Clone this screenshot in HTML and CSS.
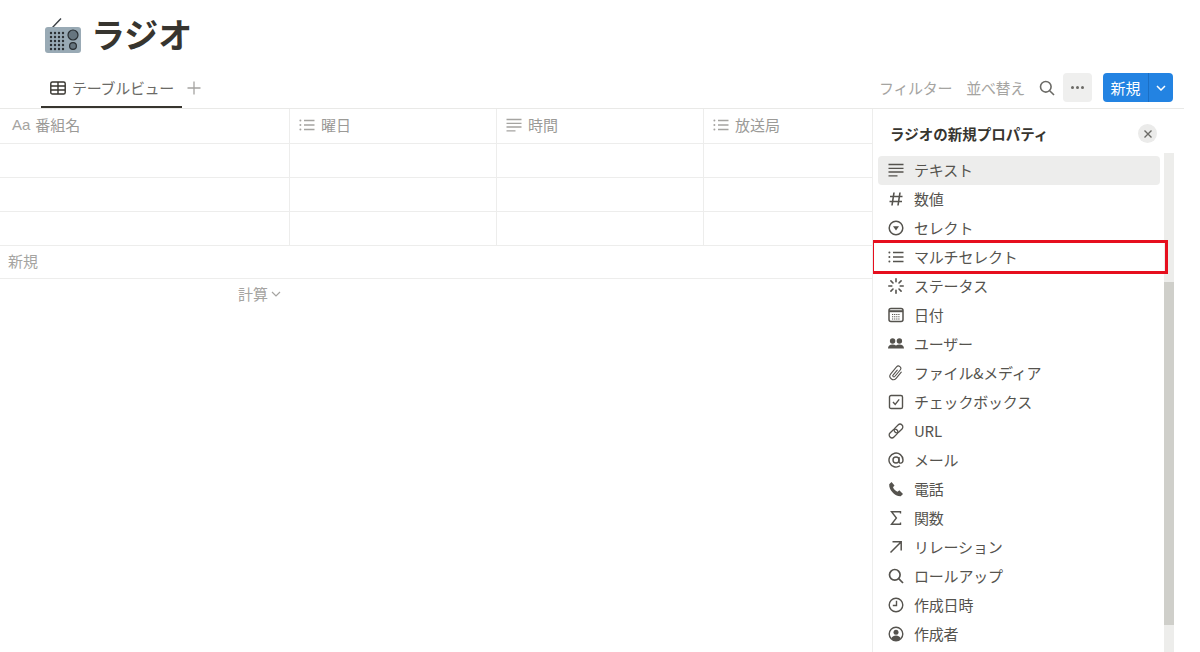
FILE: index.html
```html
<!DOCTYPE html>
<html lang="ja">
<head>
    <meta charset="UTF-8">
    <title>ラジオ</title>
    <link rel="stylesheet" href="styles.css">
</head>
<body>
    <div class="page">
        <div class="title-row">
            <svg class="radio-icon" viewBox="0 0 36 36">
                <path d="M7 10 L16 0.5" stroke="#3a3f44" stroke-width="1.4"/>
                <rect x="0" y="9" width="36" height="26" rx="3" fill="#99aab5"/>
                <g fill="#292f33">
                    <circle cx="6" cy="15" r="1.2"/><circle cx="10" cy="15" r="1.2"/><circle cx="14" cy="15" r="1.2"/><circle cx="18" cy="15" r="1.2"/>
                    <circle cx="6" cy="19" r="1.2"/><circle cx="10" cy="19" r="1.2"/><circle cx="14" cy="19" r="1.2"/><circle cx="18" cy="19" r="1.2"/>
                    <circle cx="6" cy="23" r="1.2"/><circle cx="10" cy="23" r="1.2"/><circle cx="14" cy="23" r="1.2"/><circle cx="18" cy="23" r="1.2"/>
                    <circle cx="6" cy="27" r="1.2"/><circle cx="10" cy="27" r="1.2"/><circle cx="14" cy="27" r="1.2"/><circle cx="18" cy="27" r="1.2"/>
                    <circle cx="6" cy="31" r="1.2"/><circle cx="10" cy="31" r="1.2"/><circle cx="14" cy="31" r="1.2"/><circle cx="18" cy="31" r="1.2"/>
                </g>
                <circle cx="28" cy="17" r="5" fill="#66757f" stroke="#292f33" stroke-width="1.2"/>
                <circle cx="28" cy="28" r="3.4" fill="#66757f" stroke="#292f33" stroke-width="1.2"/>
            </svg>
            <h1>ラジオ</h1>
        </div>

        <div class="toolbar">
            <div class="tab">
                <svg class="tab-icon" viewBox="0 0 16 16" fill="none" stroke="#37352f" stroke-width="1.4"><rect x="0.8" y="2" width="14.4" height="12" rx="1.6"/><path d="M1 6h14M1 10h14M8 2v12"/></svg>
                <span>テーブルビュー</span>
            </div>
            <svg class="add-view" viewBox="0 0 14 14" stroke="#a5a4a1" stroke-width="1.3"><path d="M7 0.5v13M0.5 7h13"/></svg>
            <div class="toolbar-right">
                <span class="tool-link">フィルター</span>
                <span class="tool-link">並べ替え</span>
                <svg class="search-icon" viewBox="0 0 16 16" fill="none" stroke="#6b6a66" stroke-width="1.6"><circle cx="6.8" cy="6.8" r="5.3"/><path d="M10.7 10.7l4.3 4.3"/></svg>
                <div class="more-btn"><i></i><i></i><i></i></div>
                <div class="new-btn">
                    <span class="new-label">新規</span>
                    <span class="new-arrow"><svg viewBox="0 0 10 6" fill="none" stroke="#fff" stroke-width="1.5"><path d="M1 1l4 4 4-4"/></svg></span>
                </div>
            </div>
        </div>

        <div class="content">
            <div class="table-area">
                <div class="row head">
                    <div class="cell first"><span class="aa">Aa</span>番組名</div>
                    <div class="cell">
                        <svg class="col-icon" viewBox="0 0 16 16" stroke="#a5a4a1" stroke-width="1.3"><path d="M5 3.5h10.500M5 8h10.500M5 12.500h10.500"/><g fill="#a5a4a1" stroke="none"><circle cx="1.4" cy="3.5" r="1"/><circle cx="1.4" cy="8" r="1"/><circle cx="1.4" cy="12.5" r="1"/></g></svg>
                        曜日
                    </div>
                    <div class="cell">
                        <svg class="col-icon" viewBox="0 0 16 16" stroke="#a5a4a1" stroke-width="1.3"><path d="M0.5 2.5h15M0.5 6.3h15M0.5 10h15M0.5 13.8h9"/></svg>
                        時間
                    </div>
                    <div class="cell">
                        <svg class="col-icon" viewBox="0 0 16 16" stroke="#a5a4a1" stroke-width="1.3"><path d="M5 3.5h10.500M5 8h10.500M5 12.500h10.500"/><g fill="#a5a4a1" stroke="none"><circle cx="1.4" cy="3.5" r="1"/><circle cx="1.4" cy="8" r="1"/><circle cx="1.4" cy="12.5" r="1"/></g></svg>
                        放送局
                    </div>
                </div>
                <div class="row"><div class="cell first"></div><div class="cell"></div><div class="cell"></div><div class="cell"></div></div>
                <div class="row"><div class="cell first"></div><div class="cell"></div><div class="cell"></div><div class="cell"></div></div>
                <div class="row"><div class="cell first"></div><div class="cell"></div><div class="cell"></div><div class="cell"></div></div>
                <div class="new-row">新規</div>
                <div class="calc-row">
                    <div class="calc">計算
                        <svg viewBox="0 0 10 6" fill="none" stroke="#a5a4a1" stroke-width="1.2"><path d="M1 1l4 4 4-4"/></svg>
                    </div>
                </div>
            </div>

            <div class="panel">
                <div class="panel-head">
                    <span>ラジオの新規プロパティ</span>
                    <div class="close">
                        <svg viewBox="0 0 8 8" stroke="#6b6a66" stroke-width="1.4"><path d="M0.5 0.5l7 7M7.5 0.5l-7 7"/></svg>
                    </div>
                </div>
                <div class="panel-body">
                    <div class="prop-list">
                        <div class="prop active">
                            <svg viewBox="0 0 16 16" stroke="#55534e" stroke-width="1.3"><path d="M0.5 2.5h15M0.5 6.3h15M0.5 10h15M0.5 13.8h9"/></svg>
                            <span>テキスト</span>
                        </div>
                        <div class="prop">
                            <svg viewBox="0 0 16 16" stroke="#55534e" stroke-width="1.6"><path d="M6 1.5L4 14.5M12 1.5L10 14.5M2 5.5h12.5M1.5 10.5h12.5"/></svg>
                            <span>数値</span>
                        </div>
                        <div class="prop">
                            <svg viewBox="0 0 16 16" fill="none" stroke="#55534e" stroke-width="1.5"><circle cx="8" cy="8" r="6.8"/><path d="M5 6.3h6L8 10.6z" fill="#55534e" stroke="none"/></svg>
                            <span>セレクト</span>
                        </div>
                        <div class="prop">
                            <svg viewBox="0 0 16 16" stroke="#55534e" stroke-width="1.3"><path d="M5 3.5h10.5M5 8h10.5M5 12.5h10.5"/><g fill="#55534e" stroke="none"><circle cx="1.4" cy="3.5" r="1"/><circle cx="1.4" cy="8" r="1"/><circle cx="1.4" cy="12.5" r="1"/></g></svg>
                            <span>マルチセレクト</span>
                        </div>
                        <div class="prop">
                            <svg viewBox="0 0 16 16" stroke="#55534e" stroke-width="1.6" stroke-linecap="round"><path d="M8 0.8v3M8 12.2v3M0.8 8h3M12.2 8h3M2.9 2.9l2.1 2.1M11 11l2.1 2.1M13.1 2.9L11 5M5 11l-2.1 2.1"/></svg>
                            <span>ステータス</span>
                        </div>
                        <div class="prop">
                            <svg viewBox="0 0 16 16" fill="none" stroke="#55534e" stroke-width="1.5"><rect x="1" y="1.5" width="14" height="13" rx="2"/><path d="M1 4.2h14" stroke-width="2"/><path d="M4 7.5h8M4 9.7h8M4 12h8" stroke-width="1.1" stroke-dasharray="1.2 .9"/></svg>
                            <span>日付</span>
                        </div>
                        <div class="prop">
                            <svg viewBox="0 0 16 16" fill="#55534e"><circle cx="4.6" cy="5" r="2.7"/><circle cx="11.4" cy="5" r="2.7"/><path d="M0 12.5c0-2.6 1.9-4 4.6-4 1.3 0 2.5.4 3.4 1.1.9-.7 2.1-1.1 3.4-1.1 2.7 0 4.6 1.4 4.6 4z"/></svg>
                            <span>ユーザー</span>
                        </div>
                        <div class="prop">
                            <svg viewBox="0 0 16 16" fill="none" stroke="#55534e" stroke-width="1.1" stroke-linecap="round"><path transform="rotate(40 8 8)" d="M11.5 4v8a3.5 3.5 0 0 1-7 0V3a2.4 2.4 0 0 1 4.8 0v8.5a1.1 1.1 0 0 1-2.2 0V5"/></svg>
                            <span>ファイル&amp;メディア</span>
                        </div>
                        <div class="prop">
                            <svg viewBox="0 0 16 16" fill="none" stroke="#55534e" stroke-width="1.4"><rect x="1.5" y="1.5" width="13" height="13" rx="1.6"/><path d="M5 8l2.2 2.4L11.2 5.4"/></svg>
                            <span>チェックボックス</span>
                        </div>
                        <div class="prop">
                            <svg viewBox="0 0 16 16" fill="none" stroke="#55534e" stroke-width="1.3"><g transform="translate(8 8) rotate(-45)"><rect x="-8.5" y="-2.8" width="10" height="5.6" rx="2.8"/><rect x="-1.5" y="-2.8" width="10" height="5.6" rx="2.8"/></g></svg>
                            <span>URL</span>
                        </div>
                        <div class="prop">
                            <svg viewBox="0 0 16 16" fill="none" stroke="#55534e" stroke-width="1.4"><circle cx="8" cy="8" r="3"/><path d="M11 5v4.5c0 2.5 4 2.3 4-1.5a7 7 0 1 0-3 5.8"/></svg>
                            <span>メール</span>
                        </div>
                        <div class="prop">
                            <svg viewBox="0 0 16 16" fill="#55534e"><path d="M1.2 3.3L3.500 1l3 3.400-1.500 1.800c.8 1.900 2.600 3.700 4.600 4.600l1.700-1.500L15 13l-2.300 2.300C6.800 15.500.8 9 1.200 3.300z"/></svg>
                            <span>電話</span>
                        </div>
                        <div class="prop">
                            <svg viewBox="0 0 16 16" fill="none" stroke="#55534e" stroke-width="1.4"><path d="M12.500 3.500V1.800h-9L8.400 8l-4.900 6.200h9v-1.700"/></svg>
                            <span>関数</span>
                        </div>
                        <div class="prop">
                            <svg viewBox="0 0 16 16" fill="none" stroke="#55534e" stroke-width="1.5"><path d="M2.500 13.500L13 3M4.500 2.800h8.700v8.700"/></svg>
                            <span>リレーション</span>
                        </div>
                        <div class="prop">
                            <svg viewBox="0 0 16 16" fill="none" stroke="#55534e" stroke-width="1.7"><circle cx="6.800" cy="6.800" r="5.300"/><path d="M10.700 10.700l4.300 4.300"/></svg>
                            <span>ロールアップ</span>
                        </div>
                        <div class="prop">
                            <svg viewBox="0 0 16 16" fill="none" stroke="#55534e" stroke-width="1.4"><circle cx="8" cy="8" r="6.800"/><path d="M8.500 3.800V8.500H4.800"/></svg>
                            <span>作成日時</span>
                        </div>
                        <div class="prop">
                            <svg viewBox="0 0 16 16" fill="none" stroke="#55534e" stroke-width="1.4"><circle cx="8" cy="8" r="6.800"/><circle cx="8" cy="6.300" r="2.500" fill="#55534e" stroke="none"/><path d="M3.300 12.200c1-2 2.700-2.800 4.700-2.800s3.700.8 4.700 2.800C11.500 13.800 9.800 14.500 8 14.500s-3.500-.7-4.700-2.300z" fill="#55534e" stroke="none"/></svg>
                            <span>作成者</span>
                        </div>
                    </div>
                    <div class="scrollbar"><div class="thumb"></div></div>
                </div>
                <div class="callout"></div>
            </div>
        </div>
    </div>
</body>
</html>
```

FILE: styles.css
```css
html, body {
    margin: 0;
    height: 100%;
    background-color: #fff;
    overflow: hidden;
}

body {
    font-family: "Noto Sans CJK JP", "Noto Sans", sans-serif;
    color: #37352f;
}

.page {
    width: 1184px;
    height: 652px;
    display: flex;
    flex-direction: column;
}

.title-row {
    height: 70px;
    padding-left: 45px;
    display: flex;
    align-items: flex-start;
    box-sizing: border-box;
}

.radio-icon {
    width: 36px;
    height: 36px;
    margin-top: 18px;
}

.title-row h1 {
    margin: 11px 0 0 10px;
    font-size: 34px;
    line-height: 46px;
    font-weight: 700;
    color: #37352f;
}

.toolbar {
    height: 39px;
    padding-left: 41px;
    display: flex;
    align-items: flex-start;
    border-bottom: 1px solid #e9e9e7;
    box-sizing: border-box;
}

.tab {
    width: 141px;
    height: 38px;
    box-sizing: border-box;
    padding: 3px 0 0 9px;
    display: flex;
    align-items: flex-start;
    gap: 6px;
    border-bottom: 2px solid #37352f;
    font-size: 15px;
    line-height: 30px;
    letter-spacing: -0.3px;
    color: #6b6a66;
}

.tab-icon {
    width: 16px;
    height: 16px;
    margin-top: 7px;
}

.add-view {
    width: 14px;
    height: 14px;
    margin: 11px 0 0 5px;
}

.toolbar-right {
    margin-left: auto;
    padding-right: 11px;
    display: flex;
    align-items: center;
    height: 35px;
}

.tool-link {
    font-size: 15px;
    letter-spacing: -0.3px;
    color: #a5a4a1;
    margin-right: 14px;
}

.search-icon {
    width: 16px;
    height: 16px;
    margin: 0 8px 0 0;
}

.more-btn {
    width: 29px;
    height: 29px;
    background-color: #efefee;
    border-radius: 4px;
    display: flex;
    align-items: center;
    justify-content: center;
    gap: 2px;
    margin-right: 11px;
}

.more-btn i {
    width: 3px;
    height: 3px;
    border-radius: 50%;
    background-color: #6b6a66;
}

.new-btn {
    width: 70px;
    height: 29px;
    display: flex;
    background-color: #2383e2;
    border-radius: 4px;
    color: #fff;
    font-size: 15px;
}

.new-label {
    width: 45px;
    text-align: center;
    line-height: 29px;
    border-right: 1px solid #1b6fc4;
}

.new-arrow {
    flex: 1;
    display: flex;
    align-items: center;
    justify-content: center;
}

.new-arrow svg {
    width: 10px;
    height: 6px;
}

.content {
    flex: 1;
    display: flex;
    min-height: 0;
}

.table-area {
    width: 872px;
    flex-shrink: 0;
}

.row {
    display: grid;
    grid-template-columns: 290px 207px 207px 168px;
    height: 34px;
    border-bottom: 1px solid #ededec;
    box-sizing: border-box;
}

.row.head {
    height: 35px;
    font-size: 15px;
    color: #9b9a97;
}

.row.head .cell {
    padding-bottom: 3px;
}

.cell {
    display: flex;
    align-items: center;
    padding-left: 9px;
    border-right: 1px solid #ededec;
    line-height: 28px;
}

.cell.first {
    padding-left: 12px;
}

.cell:last-child {
    border-right: none;
}

.aa {
    font-family: "Liberation Sans", sans-serif;
    font-size: 15px;
    margin-right: 5px;
    color: #a5a4a1;
}

.col-icon {
    width: 16px;
    height: 16px;
    margin-right: 6px;
}

.new-row {
    height: 33px;
    padding-left: 8px;
    border-bottom: 1px solid #ededec;
    font-size: 15px;
    line-height: 30px;
    color: #a5a4a1;
    box-sizing: border-box;
}

.calc-row {
    width: 290px;
    display: flex;
    justify-content: flex-end;
}

.calc {
    margin-right: 9px;
    display: flex;
    align-items: center;
    gap: 3px;
    height: 29px;
    font-size: 15px;
    color: #a5a4a1;
}

.calc svg {
    width: 10px;
    height: 6px;
}

.panel {
    position: relative;
    flex: 1;
    border-left: 1px solid #ededec;
    box-sizing: border-box;
    display: flex;
    flex-direction: column;
    overflow: hidden;
}

.panel-head {
    height: 44px;
    flex-shrink: 0;
    padding: 5px 27px 0 17px;
    display: flex;
    align-items: center;
    justify-content: space-between;
    font-size: 14.5px;
    font-weight: 700;
    color: #37352f;
    box-sizing: border-box;
}

.close {
    width: 19px;
    height: 19px;
    border-radius: 50%;
    background-color: #ebebea;
    display: flex;
    align-items: center;
    justify-content: center;
}

.close svg {
    width: 8px;
    height: 8px;
}

.panel-body {
    flex: 1;
    min-height: 0;
    display: flex;
    align-items: flex-start;
}

.prop-list {
    width: 282px;
    margin: 3px 0 0 5px;
    flex-shrink: 0;
}

.prop {
    height: 29px;
    padding: 0 0 2px 10px;
    display: flex;
    align-items: center;
    gap: 10px;
    box-sizing: border-box;
    border-radius: 4px;
    font-size: 15px;
    letter-spacing: -0.2px;
    color: #55534e;
}

.prop svg {
    width: 16px;
    height: 16px;
    flex-shrink: 0;
}

.prop.active {
    background-color: #ededec;
}

.scrollbar {
    width: 10px;
    height: 100%;
    margin-left: 4px;
    background-color: #ededeb;
    flex-shrink: 0;
}

.thumb {
    margin-top: 129px;
    height: 343px;
    background-color: #cfcfca;
}

.callout {
    position: absolute;
    left: -2px;
    top: 131px;
    width: 297px;
    height: 34px;
    border: 3px solid #e60f1e;
    box-sizing: border-box;
}
```
